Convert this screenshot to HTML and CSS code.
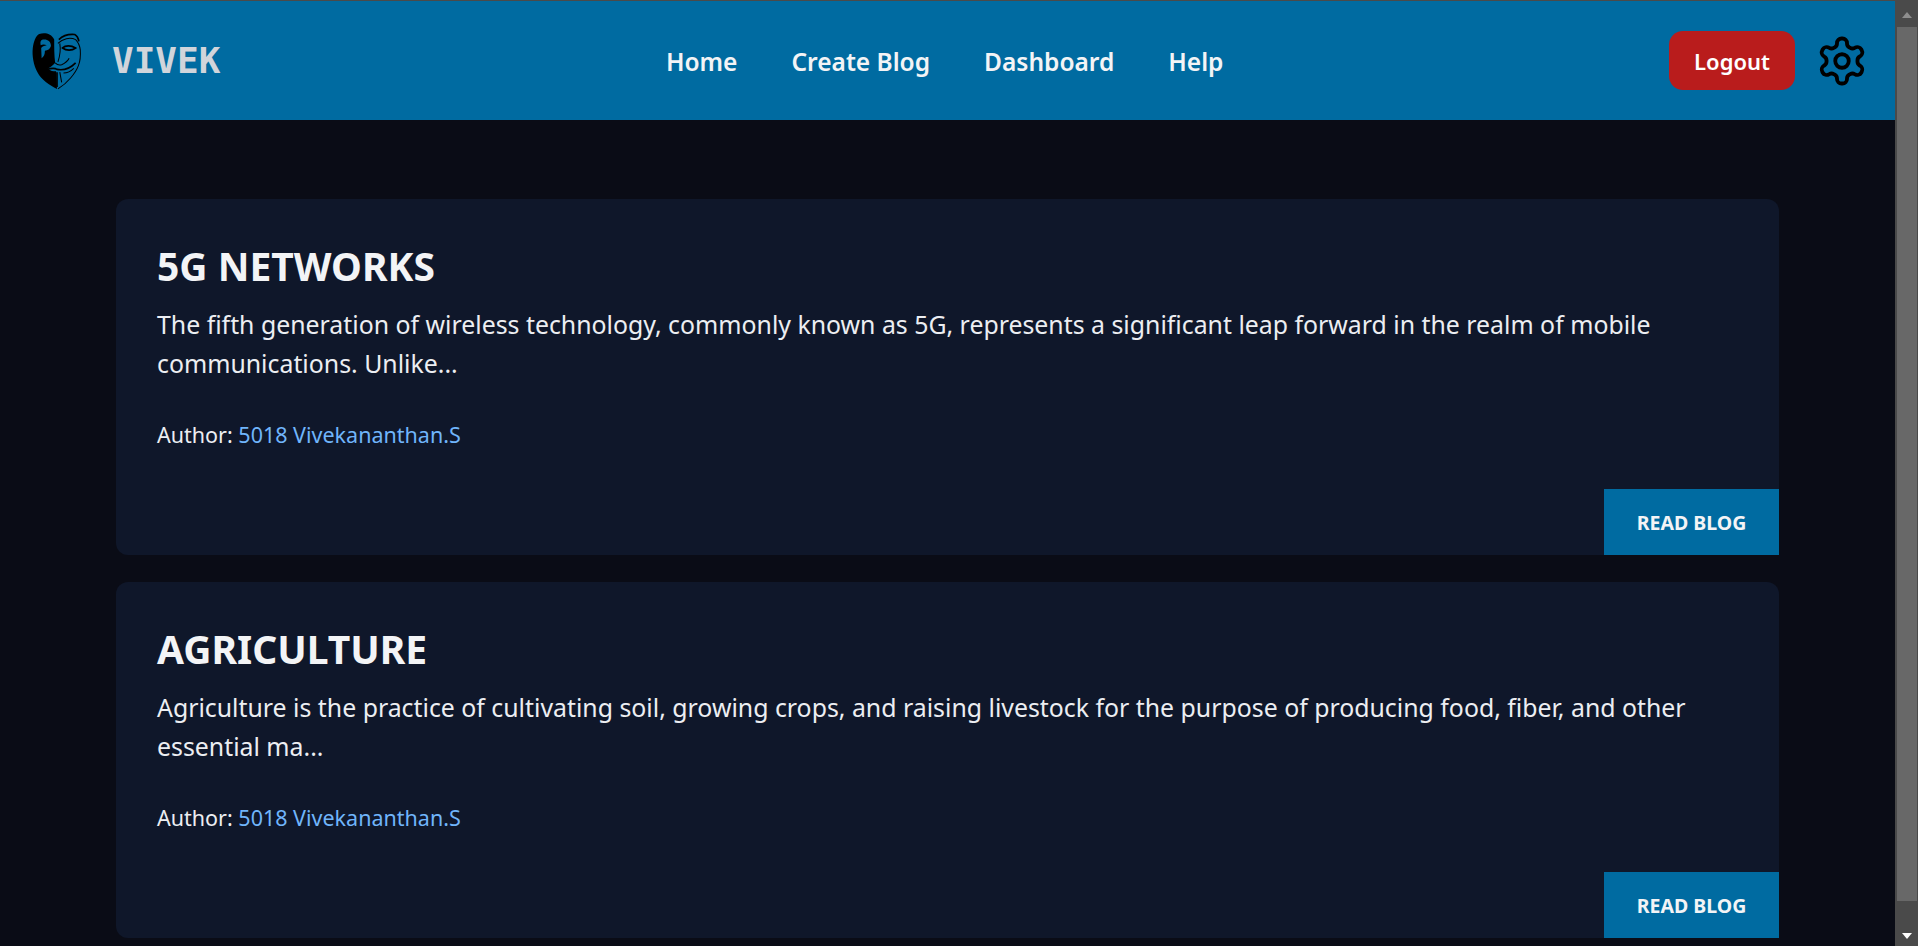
FILE: index.html
```html
<!DOCTYPE html>
<html lang="en">
<head>
    <meta charset="UTF-8">
    <meta name="viewport" content="width=device-width, initial-scale=1.0">
    <title>Vivek Blog</title>
    <link rel="stylesheet" href="styles.css">
</head>
<body>
    <div class="page">
        <header class="topbar">
            <a href="#" class="brand">
                <svg class="brand-mask" viewBox="30 28 58 66" aria-hidden="true">
                    <path class="mask-fill" fill-rule="evenodd" d="M40 32C45 30 53 31 56 38C56 46 56 55 57 63C55 65 54 67 49 69C52 72 55 72 58 72L59 91C51 87 42 81 38 73C34 66 32 55 33 47C34 40 36 34 40 32ZM44 38C41 38.500 41 41 41.500 44C43 43 46 43 48 44C45 45 43 45 42 47L42.500 58C45 56 46 54 46 50C49 50 51.500 48 52.500 45C52.500 40 49 37.500 44 38Z"/>
                    <path class="mask-line mask-heavy" d="M61 38C65 34 72 32 78 32.500C81 34 82 37 82.500 40"/>
                    <path class="mask-line" d="M60 42C65 37 73 35 79 38C82 41 83.500 45 84 49C84.500 56 84 61 82 66C79 74 70 85 60 91"/>
                    <path class="mask-line mask-heavy" d="M65 47C68 44 74 44 79 47C75 50 69 50 65 47Z"/>
                    <path class="mask-line" d="M57 63C59 65 61 66 64 65C68 63 71 60 72 58M62 42C63 48 62 56 60 62"/>
                    <path class="mask-line mask-heavy" d="M48 70C52 69 56 68 59 70C64 71 72 70 79 63M59 73V89"/>
                    <path class="mask-line" d="M62 73L64 84M56 74L55 84M66 74C70 74 74 72 77 69"/>
                </svg>
                <span class="brand-name">VIVEK</span>
            </a>
            <nav class="main-nav">
                <a href="#">Home</a>
                <a href="#">Create Blog</a>
                <a href="#">Dashboard</a>
                <a href="#">Help</a>
            </nav>
            <div class="actions">
                <button type="button" class="logout">Logout</button>
                <svg class="gear" viewBox="0 0 24 24" aria-hidden="true">
                    <path d="M12.22 2h-.44a2 2 0 0 0-2 2v.18a2 2 0 0 1-1 1.73l-.43.25a2 2 0 0 1-2 0l-.15-.08a2 2 0 0 0-2.73.73l-.22.38a2 2 0 0 0 .73 2.73l.15.1a2 2 0 0 1 1 1.72v.51a2 2 0 0 1-1 1.74l-.15.09a2 2 0 0 0-.73 2.73l.22.38a2 2 0 0 0 2.73.73l.15-.08a2 2 0 0 1 2 0l.43.25a2 2 0 0 1 1 1.73V20a2 2 0 0 0 2 2h.44a2 2 0 0 0 2-2v-.18a2 2 0 0 1 1-1.73l.43-.25a2 2 0 0 1 2 0l.15.08a2 2 0 0 0 2.73-.73l.22-.39a2 2 0 0 0-.73-2.73l-.15-.08a2 2 0 0 1-1-1.74v-.5a2 2 0 0 1 1-1.74l.15-.09a2 2 0 0 0 .73-2.73l-.22-.38a2 2 0 0 0-2.73-.73l-.15.08a2 2 0 0 1-2 0l-.43-.25a2 2 0 0 1-1-1.73V4a2 2 0 0 0-2-2z"/>
                    <circle cx="12" cy="12" r="3"/>
                </svg>
            </div>
        </header>

        <main class="blog-list">
            <article class="blog-card">
                <h2>5G NETWORKS</h2>
                <p class="summary">The fifth generation of wireless technology, commonly known as 5G, represents a significant leap forward in the realm of mobile communications. Unlike...</p>
                <p class="author">Author: <a href="#">5018 Vivekananthan.S</a></p>
                <a href="#" class="read-btn">READ BLOG</a>
            </article>
            <article class="blog-card">
                <h2>AGRICULTURE</h2>
                <p class="summary">Agriculture is the practice of cultivating soil, growing crops, and raising livestock for the purpose of producing food, fiber, and other essential ma...</p>
                <p class="author">Author: <a href="#">5018 Vivekananthan.S</a></p>
                <a href="#" class="read-btn">READ BLOG</a>
            </article>
        </main>
    </div>

    <div class="scrollbar" aria-hidden="true">
        <span class="arrow arrow-up"></span>
        <span class="thumb"></span>
        <span class="arrow arrow-down"></span>
    </div>
</body>
</html>
```

FILE: styles.css
```css
:root {
    --header-color: #006ba1;
    --page-color: #0a0c16;
    --card-color: #0f172a;
    --text-color: #eceef2;
    --link-color: #70b5fb;
    --red: #b91c1c;
}

* {
    margin: 0;
    padding: 0;
    box-sizing: border-box;
}

html, body {
    height: 100%;
    overflow: hidden;
}

body {
    display: flex;
    font-family: 'Noto Sans', 'Open Sans', sans-serif;
    background-color: var(--page-color);
    color: var(--text-color);
    border-top: 1px solid #4a4a4a;
}

a {
    color: inherit;
    text-decoration: none;
}

.page {
    flex: 1;
    min-width: 0;
    overflow: hidden;
}

/* Top bar */
.topbar {
    height: 119px;
    display: flex;
    align-items: center;
    justify-content: space-between;
    padding: 0 26px 0 30px;
    background-color: var(--header-color);
}

.brand {
    display: flex;
    align-items: center;
    gap: 28px;
}

.brand-mask {
    width: 54px;
    height: 66px;
}

.mask-fill {
    fill: #000;
}

.mask-line {
    fill: none;
    stroke: #000;
    stroke-width: 1.1;
}

.mask-heavy {
    stroke-width: 1.8;
}

.brand-name {
    font-family: 'DejaVu Sans Mono', 'Liberation Mono', monospace;
    font-size: 36px;
    font-weight: 700;
    color: #d1d5db;
}

.main-nav {
    display: flex;
    gap: 54px;
}

.main-nav a {
    padding-top: 1px;
    font-size: 24.5px;
    font-weight: 600;
    color: #f3f4f6;
}

.actions {
    display: flex;
    align-items: center;
    gap: 20px;
}

.logout {
    width: 126px;
    height: 59px;
    border: none;
    border-radius: 14px;
    background-color: var(--red);
    color: #fff;
    font-family: inherit;
    font-size: 22px;
    font-weight: 600;
}

.gear {
    width: 54px;
    height: 54px;
    fill: none;
    stroke: #000;
    stroke-width: 1.7;
    stroke-linecap: round;
    stroke-linejoin: round;
}

/* Blog cards */
.blog-list {
    display: flex;
    flex-direction: column;
    gap: 27px;
    padding: 79px 116px 0;
}

.blog-card {
    position: relative;
    height: 356px;
    padding: 42px 41px 0;
    border-radius: 12px;
    background-color: var(--card-color);
}

.blog-card h2 {
    font-size: 39px;
    font-weight: 700;
    line-height: 50px;
    color: #f3f4f6;
}

.summary {
    margin-top: 14px;
    font-size: 24.85px;
    line-height: 39px;
}

.author {
    margin-top: 37px;
    font-size: 21.5px;
    line-height: 30px;
}

.author a {
    color: var(--link-color);
}

.read-btn {
    position: absolute;
    right: 0;
    bottom: 0;
    width: 175px;
    height: 66px;
    display: flex;
    align-items: center;
    justify-content: center;
    padding-top: 1px;
    background-color: var(--header-color);
    color: #f3f4f6;
    font-size: 19.5px;
    font-weight: 700;
}

/* Scrollbar strip */
.scrollbar {
    width: 23px;
    display: flex;
    flex-direction: column;
    align-items: center;
    background-color: #4a4a4a;
}

.thumb {
    flex: 1;
    align-self: stretch;
    margin: 9px 1px 32px 2px;
    background-color: #686868;
}

.arrow {
    width: 0;
    height: 0;
    border-left: 5px solid transparent;
    border-right: 5px solid transparent;
}

.arrow-up {
    margin-top: 11px;
    border-bottom: 6px solid #8e8e8e;
}

.arrow-down {
    margin-bottom: 7px;
    border-top: 6px solid #fff;
}
```
